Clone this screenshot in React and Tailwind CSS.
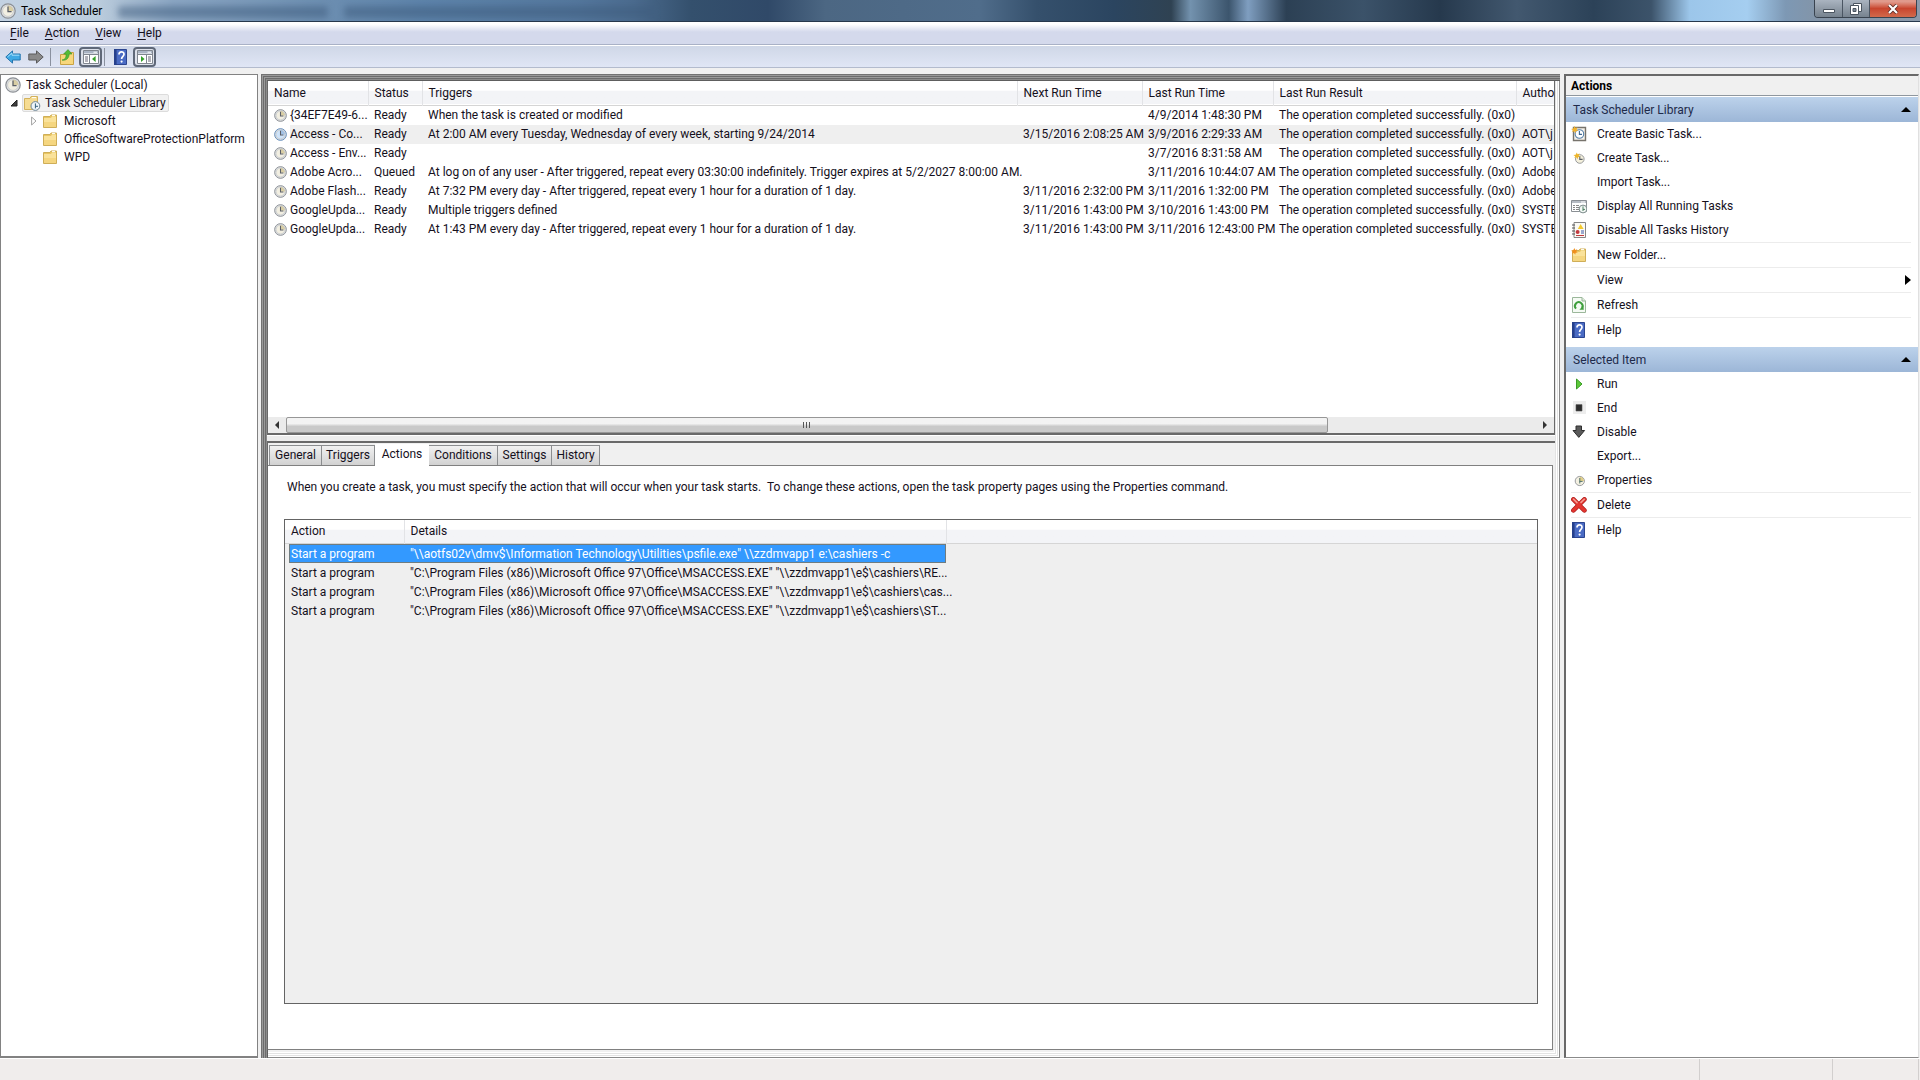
import React from "react";

const TASKS = [
  ["{34EF7E49-6...", "Ready", "When the task is created or modified", "", "4/9/2014 1:48:30 PM", ""],
  ["Access - Co...", "Ready", "At 2:00 AM every Tuesday, Wednesday of every week, starting 9/24/2014", "3/15/2016 2:08:25 AM", "3/9/2016 2:29:33 AM", "AOT\\j"],
  ["Access - Env...", "Ready", "", "", "3/7/2016 8:31:58 AM", "AOT\\j"],
  ["Adobe Acro...", "Queued", "At log on of any user - After triggered, repeat every 03:30:00 indefinitely. Trigger expires at 5/2/2027 8:00:00 AM.", "", "3/11/2016 10:44:07 AM", "Adobe"],
  ["Adobe Flash...", "Ready", "At 7:32 PM every day - After triggered, repeat every 1 hour for a duration of 1 day.", "3/11/2016 2:32:00 PM", "3/11/2016 1:32:00 PM", "Adobe"],
  ["GoogleUpda...", "Ready", "Multiple triggers defined", "3/11/2016 1:43:00 PM", "3/10/2016 1:43:00 PM", "SYSTE"],
  ["GoogleUpda...", "Ready", "At 1:43 PM every day - After triggered, repeat every 1 hour for a duration of 1 day.", "3/11/2016 1:43:00 PM", "3/11/2016 12:43:00 PM", "SYSTE"],
];

const STEPS = [
  '"\\\\aotfs02v\\dmv$\\Information Technology\\Utilities\\psfile.exe" \\\\zzdmvapp1 e:\\cashiers -c',
  '"C:\\Program Files (x86)\\Microsoft Office 97\\Office\\MSACCESS.EXE" "\\\\zzdmvapp1\\e$\\cashiers\\RE...',
  '"C:\\Program Files (x86)\\Microsoft Office 97\\Office\\MSACCESS.EXE" "\\\\zzdmvapp1\\e$\\cashiers\\cas...',
  '"C:\\Program Files (x86)\\Microsoft Office 97\\Office\\MSACCESS.EXE" "\\\\zzdmvapp1\\e$\\cashiers\\ST...',
];

function Clock({ className = "size-4", face = "#f2efe2", wedge = "#cfc08a", rim = "#8b8f94" }) {
  return (
    <svg viewBox="0 0 16 16" className={className} aria-hidden="true">
      <circle cx="8" cy="8" r="7.2" fill="#dfe1e3" stroke={rim} strokeWidth="1.2" />
      <circle cx="8" cy="8" r="5.4" fill={face} stroke="#b9bcc0" strokeWidth=".6" />
      <path d="M8 8V2.6A5.4 5.4 0 0 1 13.4 8Z" fill={wedge} opacity=".7" />
      <path d="M8 3.4V8.6H11.6" fill="none" stroke="#5c6068" strokeWidth="1.3" />
    </svg>
  );
}

function Folder({ children }) {
  return (
    <svg viewBox="0 0 16 16" className="size-4 shrink-0" aria-hidden="true">
      <path d="M1.5 3.5H8L9 2H14.5V14.5H1.5Z" fill="#e9c662" stroke="#cfae58" />
      <path d="M2 5H9L10 3.6H14V14H2Z" fill="#fae29a" />
      <path d="M2 9H14V14H2Z" fill="#f5d680" />
      <path d="M10 2.6H13" stroke="#fff" />
      {children}
    </svg>
  );
}

function LibraryFolder() {
  return (
    <svg viewBox="0 0 18 16" className="h-4 w-[18px] shrink-0" aria-hidden="true">
      <path d="M1.5 3.5H7L8 1.5H14.5V14.5H1.5Z" fill="#f6dc92" stroke="#d3b25c" />
      <path d="M9 2.6H13" stroke="#fff" />
      <circle cx="12.4" cy="11" r="4.4" fill="#eef5fa" stroke="#6d8494" />
      <path d="M12.4 8.4V13.4M12.4 11.3H15" fill="none" stroke="#34607c" />
    </svg>
  );
}

const STAR = "M4.5 0L5.6 2.6L8.4 1.6L7 4.2L9 6L6.2 6.2L5.6 9L4 6.6L1.2 7.6L2.4 5L0 3.6L3 3Z";

function HelpIcon() {
  return (
    <svg viewBox="0 0 16 16" className="size-4 shrink-0" aria-hidden="true">
      <path d="M1.5 .5H13.5V15.5H1.5Z" fill="#4a6bc4" stroke="#2c4590" />
      <path d="M1 0H3.6V16H1Z" fill="#26408c" />
      <path d="M6 5.4C6 2 11 2 11 5.2C11 7.4 8.6 7.2 8.6 10" fill="none" stroke="#fff" strokeWidth="1.7" />
      <circle cx="8.6" cy="12.6" r="1.1" fill="#fff" />
    </svg>
  );
}

function PaneIcon({ flip }) {
  return (
    <svg viewBox="0 0 16 16" className="size-4" aria-hidden="true">
      <path d="M.5 1.5H15.5V14.5H.5Z" fill="#fff" stroke="#80868f" />
      <path d="M1 2H15V4.5H1Z" fill="#aab4c4" />
      <path d="M1 5.5H15" stroke="#80868f" />
      <path d="M10.5 3.2H14" stroke="#fff" />
      {flip ? (
        <g>
          <path d="M9.5 5.5V14" stroke="#80868f" />
          <path d="M11 8H14M11 10H14M11 12H14" stroke="#667" />
          <path d="M4 7L7.6 10L4 13Z" fill="#35a02a" />
        </g>
      ) : (
        <g>
          <path d="M6.5 5.5V14" stroke="#80868f" />
          <path d="M2 8H5M2 10H5M2 12H5" stroke="#667" />
          <path d="M12.6 7L9 10L12.6 13Z" fill="#35a02a" />
        </g>
      )}
    </svg>
  );
}

const svg = (children) => (
  <svg viewBox="0 0 16 16" className="size-4 shrink-0" aria-hidden="true">
    {children}
  </svg>
);

const ICONS = {
  basic: svg(
    <g>
      <path d="M2.5 1.5H14.5V14.5H2.5Z" fill="#f4f1ea" stroke="#77736c" strokeWidth="1.4" />
      <circle cx="8.4" cy="8" r="4.3" fill="#fff" stroke="#557fa8" strokeWidth="1.1" />
      <path d="M8.4 5V8.4H11" fill="none" stroke="#3e678f" strokeWidth="1.1" />
      <path d={STAR} transform="scale(.8)" fill="#f1b32d" />
    </g>
  ),
  create: svg(
    <g>
      <circle cx="8.8" cy="9" r="4.3" fill="#f4f0dc" stroke="#989a9c" />
      <path d="M8.8 6V9.4H11.6" fill="none" stroke="#5d6166" strokeWidth="1.1" />
      <path d={STAR} transform="translate(2.4 2.4) scale(.75)" fill="#edb52b" />
    </g>
  ),
  running: svg(
    <g>
      <path d="M.5 2.5H15.5V13.5H.5Z" fill="#fff" stroke="#8a8f94" />
      <path d="M1 3H15V5H1Z" fill="#b6bcc4" />
      <path d="M10 4H14" stroke="#fff" />
      <path d="M2 7.5H4M5 7.5H8M2 9.5H4M5 9.5H8M2 11.5H4M5 11.5H8" stroke="#888" />
      <circle cx="12" cy="11" r="3.9" fill="#f3f8f5" stroke="#7c8b8b" />
      <path d="M12 8.4V13M12 11.4H14" fill="none" stroke="#4c7f63" />
    </g>
  ),
  history: svg(
    <g>
      <path d="M3 .5H14.5V15.5H3Z" fill="#fbfaf4" stroke="#858585" />
      <path d="M1 3H4M1 6H4M1 9H4M1 12H4" stroke="#555" />
      <path d="M9.6 2L12.6 7H6.8Z" fill="#f3c92e" />
      <circle cx="6.6" cy="10" r="2" fill="#c23a3f" />
      <path d="M10 9H13M10 11H13" stroke="#3d58a8" />
      <path d="M5 13.5H13" stroke="#c23a3f" />
    </g>
  ),
  folder: (
    <Folder>
      <path d={STAR} transform="translate(0 1) scale(.75)" fill="#f08f1c" />
    </Folder>
  ),
  refresh: svg(
    <g>
      <path d="M1.5 .5H11L14.5 4V15.5H1.5Z" fill="#f5faf4" stroke="#9bb79a" />
      <path d="M11 .5V4H14.5" fill="#dcebdb" stroke="#9bb79a" />
      <path d="M5 11.6A3.8 3.8 0 1 1 11 11" fill="none" stroke="#3f9f3d" strokeWidth="2" />
      <path d="M12.8 12.8H8.4L12.2 8.6Z" fill="#3f9f3d" />
    </g>
  ),
  help: <HelpIcon />,
  run: svg(<path d="M5.5 3L11 8L5.5 13Z" fill="#5cc83a" stroke="#3a9c25" />),
  end: svg(
    <g>
      <path d="M2 1H15V14H2Z" fill="#ededed" />
      <path d="M5 4.6H11V11H5Z" fill="#2d2d2d" stroke="#555" strokeWidth=".6" />
    </g>
  ),
  disable: svg(
    <path d="M5 2H10.5V6.5H13.6L7.8 13.4L2 6.5H5Z" fill="#5a5a5a" stroke="#2f2f2f" />
  ),
  properties: svg(
    <g>
      <circle cx="8.8" cy="9" r="4.6" fill="#f4f1e2" stroke="#9b9da0" />
      <path d="M8.8 9V4.8A4.2 4.2 0 0 1 13 9Z" fill="#e0cf8c" />
      <path d="M8.8 6V9.4H11.6M8.8 9V11.5" fill="none" stroke="#4f7068" />
    </g>
  ),
  remove: svg(
    <g strokeLinecap="round">
      <path d="M2.4 2.4L13.4 13.4M13.4 2.4L2.4 13.4" stroke="#a81919" strokeWidth="4.6" />
      <path d="M2.4 2.4L13.4 13.4M13.4 2.4L2.4 13.4" stroke="#e2352f" strokeWidth="3.4" />
      <path d="M2.6 2.2L6 5.6M13.2 2.2L10 5.4" stroke="#f39a90" strokeWidth="1.6" />
    </g>
  ),
};

function PaneItem({ icon, label, arrow, line }) {
  return (
    <li className={line ? "mr-[7px] ml-[5px] border-b border-[#ececec]" : "mr-[7px] ml-[5px]"}>
      <button type="button" className="flex h-6 w-full items-center text-left">
        <span className="flex w-6.5 shrink-0">{icon ? ICONS[icon] : null}</span>
        <span className="flex-1">{label}</span>
        {arrow && (
          <svg viewBox="0 0 6 10" className="h-2.5 w-1.5" aria-hidden="true">
            <path d="M0 0L6 5L0 10Z" fill="#000" />
          </svg>
        )}
      </button>
    </li>
  );
}

function PaneHeading({ children }) {
  return (
    <h3>
      <button
        type="button"
        className="flex h-[25px] w-full items-center justify-between bg-linear-to-b from-[#bcd2eb] to-[#9cb6d7] pr-[7px] pl-[7px] text-left text-[#1e2a4a]"
      >
        {children}
        <svg viewBox="0 0 10 5" className="h-[5px] w-2.5" aria-hidden="true">
          <path d="M0 5L5 0L10 5Z" fill="#000" />
        </svg>
      </button>
    </h3>
  );
}

const TH = "border-r border-[#e2e3e6] p-0 pl-1.5 text-left font-normal";
const HEAD = "h-6 border-b border-[#d5d5d5] bg-linear-to-b from-white from-40% to-[#f3f4f7] to-45%";
const TAB = "h-5 border border-b-0 border-[#8b8d8f] bg-linear-to-b from-[#f1f1f1] to-[#d2d2d2] text-center -ml-px first:ml-0";

export default function App() {
  return (
    <div className="flex h-screen min-w-0 flex-col overflow-hidden bg-[#f0f0f0] font-['Roboto','Open_Sans',sans-serif] text-[12px] leading-[18px] text-[#15101c]">
      <header className="relative flex h-[22px] shrink-0 items-center justify-between overflow-hidden border-b border-[#27384c] bg-[linear-gradient(90deg,#c3d2e2_0%,#bccddd_5%,#8ba6c3_9%,#6f90b2_16%,#5d83aa_22%,#54779d_30%,#4b6b8e_33%,#34506d_36%,#304968_40%,#4c6783_43%,#506d8b_51%,#35506c_54%,#2b4560_58%,#2f4252_61%,#7392ae_62%,#3c556d_64%,#7f9ec0_65%,#2c4054_67%,#3b5269_71%,#26394d_75%,#42586f_79%,#2c4258_83%,#3c536a_86%,#9cc6ea_88%,#a5cef0_91%,#7d98b4_93%,#8494a6_95%,#8b9aab_100%)]">
        <span className="pointer-events-none absolute top-1.5 left-[118px] h-3 w-[210px] rounded bg-[#3d5c7e]/50 blur-[3px]" />
        <span className="pointer-events-none absolute top-1.5 left-[344px] h-3 w-[310px] rounded bg-[#3d5c7e]/50 blur-[3px]" />
        <div className="relative flex items-center gap-[5px]">
          <Clock className="size-4" />
          <h1 className="text-black">Task Scheduler</h1>
        </div>
        <div className="relative mr-[3px] flex h-[18px] self-start overflow-hidden rounded-b border border-t-0 border-[#39434f] text-white">
          <button type="button" aria-label="Minimize" className="flex w-[28px] items-center justify-center border-r border-[#4a5562] bg-linear-to-b from-[#aab4c0] to-[#77838f]">
            <svg viewBox="0 0 12 10" className="h-2.5 w-3"><path d="M.5 5.5H11.5V8.5H.5Z" fill="#fff" stroke="#4b5560" /></svg>
          </button>
          <button type="button" aria-label="Restore" className="flex w-[27px] items-center justify-center border-r border-[#4a5562] bg-linear-to-b from-[#aab4c0] to-[#77838f]">
            <svg viewBox="0 0 12 12" className="size-3"><path d="M3.5 .5H11.5V8.5H3.5Z" fill="#fff" stroke="#4b5560" /><path d="M.5 2.5H8.5V11.5H.5Z" fill="#fff" stroke="#4b5560" /><path d="M3 5.5H6V8.5H3Z" fill="#7e8a97" stroke="#4b5560" /></svg>
          </button>
          <button type="button" aria-label="Close" className="flex w-[46px] items-center justify-center bg-linear-to-b from-[#e09a8c] from-10% via-[#c8452e] via-50% to-[#d2694b]">
            <svg viewBox="0 0 12 10" className="h-2.5 w-3"><path d="M2 1L10 9M10 1L2 9" stroke="#5b2a24" strokeWidth="3.8" /><path d="M2 1L10 9M10 1L2 9" stroke="#fff" strokeWidth="2.2" /></svg>
          </button>
        </div>
      </header>

      <nav className="flex h-[23px] shrink-0 items-center border-b border-[#a9b1c6] bg-linear-to-b from-white to-[#d4d9ec] from-10% to-45% pl-0.5">
        {["File", "Action", "View", "Help"].map((m) => (
          <button key={m} type="button" className="px-2">
            <span className="underline underline-offset-2">{m[0]}</span>
            {m.slice(1)}
          </button>
        ))}
      </nav>

      <div className="flex h-[23px] shrink-0 items-center border-t border-b border-t-white border-b-[#b3bbcd] bg-linear-to-b from-[#cfd7e7] to-[#e0e6f5] pl-[5px]">
        <button type="button" aria-label="Back">
          <svg viewBox="0 0 16 14" className="h-3.5 w-4"><path d="M.8 7L7.5 .9V4H15.2V10H7.5V13.1Z" fill="#3fa9e4" stroke="#2474ae" /><path d="M2.6 6.8L7 3V5.2H14.4" fill="none" stroke="#a4def9" /></svg>
        </button>
        <button type="button" aria-label="Forward" className="ml-[7px]">
          <svg viewBox="0 0 16 14" className="h-3.5 w-4"><path d="M15.2 7L8.5 .9V4H.8V10H8.5V13.1Z" fill="#8a8a8a" stroke="#5a5a5a" /></svg>
        </button>
        <span className="mr-2 ml-1.5 h-[18px] w-px bg-[#8a919f]" />
        <button type="button" aria-label="Up one level">
          <svg viewBox="0 0 16 16" className="size-4"><path d="M1.5 5.5H8L9 3.5H14.5V15.5H1.5Z" fill="#f7d77c" stroke="#c9a344" /><path d="M3 11C6.6 10.6 7.2 8 7 5H4.6L9 .6L13 5H10.2C10 9 7.4 12 3 11Z" fill="#55bb35" stroke="#39922a" strokeWidth=".6" /></svg>
        </button>
        <button type="button" aria-label="Show or hide console tree" className="ml-1 flex h-5 w-[23px] items-center justify-center rounded-sm border-2 border-[#5f6878] bg-[#dde1ea]">
          <PaneIcon />
        </button>
        <span className="mr-2 ml-0.5 h-[18px] w-px bg-[#8a919f]" />
        <button type="button" aria-label="Help"><HelpIcon /></button>
        <button type="button" aria-label="Show or hide action pane" className="ml-1 flex h-5 w-[23px] items-center justify-center rounded-sm border-2 border-[#5f6878] bg-[#dde1ea]">
          <PaneIcon flip />
        </button>
      </div>

      <main className="flex min-h-0 flex-1 pt-1.5">
        <aside className="w-[258px] shrink-0 border border-b-2 border-[#828282] bg-white pt-px">
          <ul>
            <li className="flex h-[18px] items-center gap-[5px] pl-1">
              <Clock className="size-4" />
              <button type="button">Task Scheduler (Local)</button>
            </li>
            <li className="flex h-[18px] items-center pl-[9px]">
              <svg viewBox="0 0 8 8" className="mr-1 size-2" aria-hidden="true"><path d="M7 1V7H1Z" fill="#404040" stroke="#222" /></svg>
              <button type="button" className="flex h-[18px] items-center gap-1 rounded-xs border border-[#dcdcdc] bg-[#f1f1f1] pr-0.5">
                <LibraryFolder />
                Task Scheduler Library
              </button>
            </li>
            {["Microsoft", "OfficeSoftwareProtectionPlatform", "WPD"].map((f, i) => (
              <li key={f} className="flex h-[18px] items-center pl-[30px]">
                <span className="w-[11px]">
                  {i === 0 && (
                    <svg viewBox="0 0 6 10" className="h-2.5 w-1.5" aria-hidden="true"><path d="M.6 1L5 5L.6 9Z" fill="#fff" stroke="#a3a3a3" /></svg>
                  )}
                </span>
                <button type="button" className="flex items-center gap-1.5"><Folder />{f}</button>
              </li>
            ))}
          </ul>
        </aside>

        <section className="ml-[3px] grid min-w-0 flex-1 grid-rows-[minmax(0,360fr)_minmax(0,610fr)] pt-[7px] pr-[5px] pb-2 pl-1.5 shadow-[inset_1px_1px_0_#727272,inset_2px_2px_0_#9a9a9a,inset_3px_3px_0_#6c6c6c,inset_4px_4px_0_#9a9a9a,inset_5px_5px_0_#6c6c6c,inset_6px_6px_0_#8b8b8b,inset_7px_7px_0_#5e5e5e,inset_-1px_-1px_0_#8a8a8a,inset_-2px_-2px_0_#fff,inset_-3px_-3px_0_#e3e3e3,inset_-4px_-4px_0_#fff,inset_-5px_-5px_0_#e3e3e3,inset_-6px_-6px_0_#fff]">
          <div className="flex min-w-0 flex-col">
            <div className="flex min-h-0 flex-1 flex-col border-r border-b-2 border-l border-[#696969] bg-white">
              <div className="min-h-0 flex-1 overflow-hidden">
                <table className="w-full table-fixed border-collapse whitespace-nowrap">
                  <colgroup>
                    <col className="w-[100px]" />
                    <col className="w-[54px]" />
                    <col />
                    <col className="w-[125px]" />
                    <col className="w-[131px]" />
                    <col className="w-[243px]" />
                    <col className="w-[38px]" />
                  </colgroup>
                  <thead>
                    <tr className={HEAD}>
                      {["Name", "Status", "Triggers", "Next Run Time", "Last Run Time", "Last Run Result"].map((h) => (
                        <th key={h} className={TH}>{h}</th>
                      ))}
                      <th className="p-0 pl-1.5 text-left font-normal">Autho</th>
                    </tr>
                  </thead>
                  <tbody>
                    {TASKS.map((t, i) => (
                      <tr key={i} className={i === 1 ? "h-[19px] bg-[#efefef]" : "h-[19px]"}>
                        <td className="p-0">
                          <span className="flex items-center">
                            <span className="flex bg-white py-[3px] pr-[3px] pl-1.5">
                              {i === 1 ? (
                                <Clock className="size-[13px]" face="#cfe4fa" wedge="#8fb4dd" rim="#5d88b8" />
                              ) : (
                                <Clock className="size-[13px]" />
                              )}
                            </span>
                            {t[0]}
                          </span>
                        </td>
                        <td className="p-0 pl-1.5">{t[1]}</td>
                        <td className="p-0 pl-1.5">{t[2]}</td>
                        <td className="p-0 pl-1.5">{t[3]}</td>
                        <td className="p-0 pl-1.5">{t[4]}</td>
                        <td className="p-0 pl-1.5">The operation completed successfully. (0x0)</td>
                        <td className="p-0 pl-1.5">{t[5]}</td>
                      </tr>
                    ))}
                  </tbody>
                </table>
              </div>
              <div className="flex h-4 shrink-0 items-stretch bg-[#ebebeb]">
                <button type="button" aria-label="Scroll left" className="flex w-[18px] items-center justify-center">
                  <svg viewBox="0 0 4 8" className="h-2 w-1"><path d="M4 0V8L0 4Z" fill="#333" /></svg>
                </button>
                <div className="flex-1">
                  <div className="flex h-full w-5/6 items-center justify-center gap-0.5 rounded-xs border border-[#979797] bg-linear-to-b from-[#f3f3f3] from-40% to-[#c9c9c9] to-60%">
                    <span className="h-1.5 w-px bg-[#555]" />
                    <span className="h-1.5 w-px bg-[#555]" />
                    <span className="h-1.5 w-px bg-[#555]" />
                  </div>
                </div>
                <button type="button" aria-label="Scroll right" className="flex w-[18px] items-center justify-center">
                  <svg viewBox="0 0 4 8" className="h-2 w-1"><path d="M0 0V8L4 4Z" fill="#333" /></svg>
                </button>
              </div>
            </div>
            <div className="h-1.5 shrink-0 border-t border-white bg-[#ececec]" />
          </div>

          <div className="flex min-h-0 min-w-0 flex-col border-t-2 border-l border-[#696969] bg-[#f0f0f0]">
            <div role="tablist" className="flex h-[22px] items-end pl-px">
              <button role="tab" type="button" className={TAB + " w-[53px]"}>General</button>
              <button role="tab" type="button" className={TAB + " w-[54px]"}>Triggers</button>
              <button role="tab" type="button" aria-selected="true" className="z-10 -mb-px h-[22px] w-[54px] bg-white pb-0.5 text-center">Actions</button>
              <button role="tab" type="button" className={TAB + " w-[70px]"}>Conditions</button>
              <button role="tab" type="button" className={TAB + " w-[55px]"}>Settings</button>
              <button role="tab" type="button" className={TAB + " w-[49px]"}>History</button>
            </div>
            <div role="tabpanel" className="mr-0.5 flex min-h-0 flex-1 flex-col border-t border-r border-b border-[#808080] bg-white pt-3 pr-3.5 pb-[45px] pl-4">
              <p className="ml-[3px] whitespace-pre">When you create a task, you must specify the action that will occur when your task starts.  To change these actions, open the task property pages using the Properties command.</p>
              <div className="mt-[23px] min-h-0 flex-1 overflow-hidden border border-[#646464] bg-[#efefef]">
                <table className="w-full table-fixed border-collapse whitespace-nowrap">
                  <colgroup>
                    <col className="w-[119px]" />
                    <col className="w-[542px]" />
                    <col />
                  </colgroup>
                  <thead>
                    <tr className={HEAD}>
                      <th className={TH}>Action</th>
                      <th className={TH}>Details</th>
                      <th className="p-0" />
                    </tr>
                  </thead>
                  <tbody>
                    {STEPS.map((s, i) => (
                      <tr key={i} className="h-[19px]">
                        <td colSpan={2} className="p-0 pl-1">
                          <div className={i === 0 ? "flex h-[19px] items-center bg-[#3399ff] text-white outline outline-1 -outline-offset-1 outline-[#6f7c80]" : "flex h-[19px] items-center"}>
                            <span className="w-[121px] shrink-0 pl-0.5">Start a program</span>
                            <span>{s}</span>
                          </div>
                        </td>
                        <td className="p-0" />
                      </tr>
                    ))}
                  </tbody>
                </table>
              </div>
            </div>
          </div>
        </section>

        <aside className="mr-px ml-1 flex w-[355px] shrink-0 flex-col border-t-2 border-r border-b border-l-2 border-t-[#696969] border-r-[#e0e0e0] border-b-[#8a8a8a] border-l-[#696969] bg-white">
          <h2 className="h-5 border-b border-[#8f979f] bg-[#f0f0f0] pt-px pl-[5px] font-bold text-black">Actions</h2>
          <div className="mt-px">
            <PaneHeading>Task Scheduler Library</PaneHeading>
            <ul className="mb-[5px]">
              <PaneItem icon="basic" label="Create Basic Task..." />
              <PaneItem icon="create" label="Create Task..." />
              <PaneItem label="Import Task..." />
              <PaneItem icon="running" label="Display All Running Tasks" />
              <PaneItem icon="history" label="Disable All Tasks History" line />
              <PaneItem icon="folder" label="New Folder..." line />
              <PaneItem label="View" arrow line />
              <PaneItem icon="refresh" label="Refresh" line />
              <PaneItem icon="help" label="Help" />
            </ul>
            <PaneHeading>Selected Item</PaneHeading>
            <ul>
              <PaneItem icon="run" label="Run" />
              <PaneItem icon="end" label="End" />
              <PaneItem icon="disable" label="Disable" />
              <PaneItem label="Export..." />
              <PaneItem icon="properties" label="Properties" line />
              <PaneItem icon="remove" label="Delete" line />
              <PaneItem icon="help" label="Help" />
            </ul>
          </div>
        </aside>
      </main>

      <footer className="flex h-[22px] shrink-0 border-t border-white bg-[#f0edec]">
        <span className="flex-1 border-r border-[#d2cfce]" />
        <span className="w-[133px] border-r border-[#d2cfce]" />
        <span className="mr-px w-[86px] border-r border-[#d2cfce]" />
      </footer>
    </div>
  );
}
